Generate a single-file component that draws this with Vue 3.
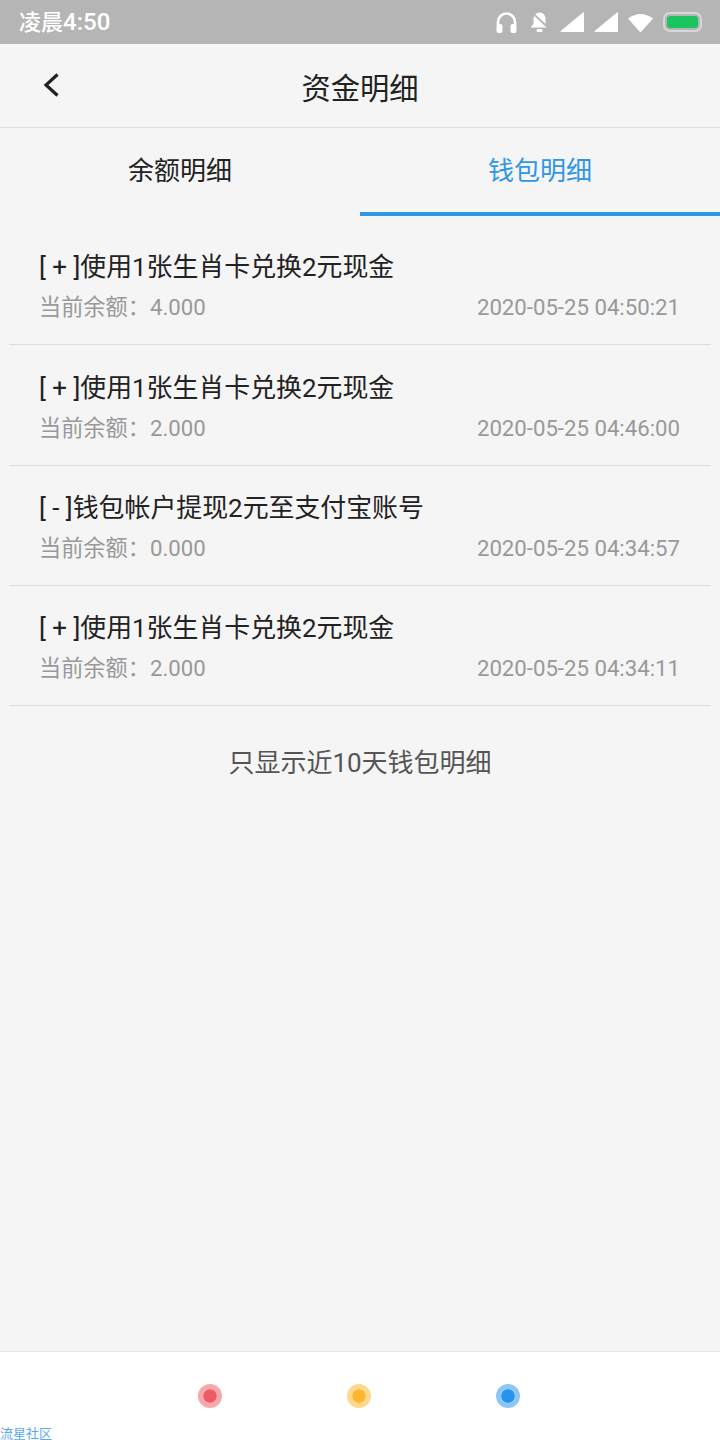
<template>
  <div class="page">
    <div class="status">
      <span class="time">凌晨<span class="time-num">4:50</span></span>
      <div class="status-icons">
        <svg class="headset" width="21" height="21" viewBox="0 0 21 21"><path d="M2 13V10a8.500 8.500 0 0 1 17 0v3" fill="none" stroke="#fff" stroke-width="2.600"/><rect x="0.500" y="12" width="6" height="9" rx="2" fill="#fff"/><rect x="14.500" y="12" width="6" height="9" rx="2" fill="#fff"/></svg>
        <svg class="bell" width="19" height="20" viewBox="0 0 19 20"><path d="M3.500 6.500a6 6 0 0 1 12 0v5.500l3 3.500H.5l3-3.500z" fill="#fff"/><rect x="6.500" y="17" width="6" height="3" rx="1.500" fill="#fff"/><path d="M1.500 0l17.500 16.500" stroke="#b5b5b5" stroke-width="1.800"/></svg>
        <svg width="24" height="20" viewBox="0 0 24 20"><path d="M24 1v19H1a.6.600 0 0 1-.4-1L23 .4a.6.600 0 0 1 1 .6z" fill="#fff"/></svg>
        <svg width="24" height="20" viewBox="0 0 24 20"><path d="M24 1v19H1a.6.600 0 0 1-.4-1L23 .4a.6.600 0 0 1 1 .6z" fill="#fff"/></svg>
        <svg width="25" height="19" viewBox="0 0 25 19"><path d="M0 5.500Q12.500-3.500 25 5.500L13.500 18.500a1.400 1.400 0 0 1-2 0z" fill="#fff"/></svg>
        <div class="battery"><div class="battery-fill"></div></div>
      </div>
    </div>

    <div class="header">
      <svg class="back" width="18" height="26" viewBox="0 0 18 26"><path d="M15.500 2.500L4 13 15.500 23.500" fill="none" stroke="#222" stroke-width="3.200"/></svg>
      <span class="title">资金明细</span>
    </div>

    <div class="tabs">
      <div v-for="(t, i) in tabs" :key="t" class="tab" :class="{ active: i === 1 }">{{ t }}</div>
    </div>

    <ul class="list">
      <li v-for="r in records" :key="r.time" class="row">
        <div class="row-title"><span class="sign">[ {{ r.sign }} ]</span>{{ r.text }}</div>
        <div class="row-meta">
          <span>当前余额：{{ r.balance }}</span>
          <span>{{ r.time }}</span>
        </div>
      </li>
    </ul>

    <p class="note">只显示近10天钱包明细</p>

    <div class="nav">
      <span class="dot red"></span>
      <span class="dot yellow"></span>
      <span class="dot blue"></span>
    </div>
    <span class="mark">流星社区</span>
  </div>
</template>

<script setup>
const tabs = ['余额明细', '钱包明细']
const records = [
  { sign: '+', text: '使用1张生肖卡兑换2元现金', balance: '4.000', time: '2020-05-25 04:50:21' },
  { sign: '+', text: '使用1张生肖卡兑换2元现金', balance: '2.000', time: '2020-05-25 04:46:00' },
  { sign: '-', text: '钱包帐户提现2元至支付宝账号', balance: '0.000', time: '2020-05-25 04:34:57' },
  { sign: '+', text: '使用1张生肖卡兑换2元现金', balance: '2.000', time: '2020-05-25 04:34:11' }
]
</script>

<style>
html, body { margin: 0; background: #f5f5f5; }
</style>

<style scoped>
.page {
  position: relative;
  width: 720px;
  height: 1440px;
  overflow: hidden;
  display: flex;
  flex-direction: column;
  background: #f5f5f5;
  font-family: Roboto, "Noto Sans CJK SC", sans-serif;
}
.status {
  height: 44px;
  flex: none;
  box-sizing: border-box;
  background: #b5b5b5;
  color: #fff;
  display: flex;
  align-items: center;
  justify-content: space-between;
  padding: 0 18px 0 19px;
}
.time {
  font-size: 22px;
  font-weight: 500;
  margin-top: -4px;
}
.time-num {
  font-size: 24px;
}
.status-icons {
  display: flex;
  align-items: center;
  gap: 10px;
}
.headset { margin-right: 3px; }
.bell { margin-right: 1px; }
.battery {
  width: 39px;
  height: 20px;
  box-sizing: border-box;
  border: 2px solid #d6d9d7;
  border-radius: 7px;
  padding: 2px;
}
.battery-fill {
  height: 100%;
  background: #1cc45f;
  border-radius: 3px;
}
.header {
  height: 83px;
  flex: none;
  position: relative;
  display: flex;
  align-items: center;
  justify-content: center;
  border-bottom: 1px solid #dcdcdc;
}
.back {
  position: absolute;
  left: 42px;
  top: 28px;
}
.title {
  font-size: 29.3px;
  color: #222;
  margin-top: 1px;
}
.tabs {
  height: 88px;
  flex: none;
  display: flex;
}
.tab {
  flex: 1;
  box-sizing: border-box;
  display: flex;
  align-items: center;
  justify-content: center;
  padding-bottom: 4px;
  font-size: 26px;
  color: #222;
  border-bottom: 4px solid transparent;
}
.tab.active {
  color: #2f96e6;
  border-bottom-color: #2f96e6;
}
.list {
  list-style: none;
  margin: 0;
  padding: 8px 9px 0;
}
.row {
  height: 120px;
  box-sizing: border-box;
  padding: 22px 31px 0 30px;
  border-bottom: 1px solid #dcdcdc;
}
.row:nth-child(-n+2) {
  height: 121px;
  padding-top: 23px;
}
.row-title {
  font-size: 25.9px;
  line-height: 40px;
  color: #222;
}
.row-meta {
  display: flex;
  justify-content: space-between;
  font-size: 22.2px;
  line-height: 40px;
  color: #999;
}
.note {
  margin: 37px 0 0;
  text-align: center;
  font-size: 26px;
  line-height: 40px;
  color: #555;
}
.nav {
  margin-top: auto;
  height: 88px;
  flex: none;
  background: #fff;
  border-top: 1px solid #e6e6e6;
  display: flex;
  align-items: center;
  justify-content: center;
  gap: 125px;
  padding-right: 2px;
}
.dot {
  width: 14px;
  height: 14px;
  border-radius: 50%;
  border: 5px solid;
  background-clip: padding-box;
}
.red { background-color: #ee5b66; border-color: #f8a8ac; }
.yellow { background-color: #ffb52e; border-color: #ffd88c; }
.blue { background-color: #2494ee; border-color: #8cc6f8; }
.mark {
  position: absolute;
  left: 0;
  bottom: -1px;
  font-size: 13px;
  line-height: 15px;
  color: #5aa9f0;
}
</style>
